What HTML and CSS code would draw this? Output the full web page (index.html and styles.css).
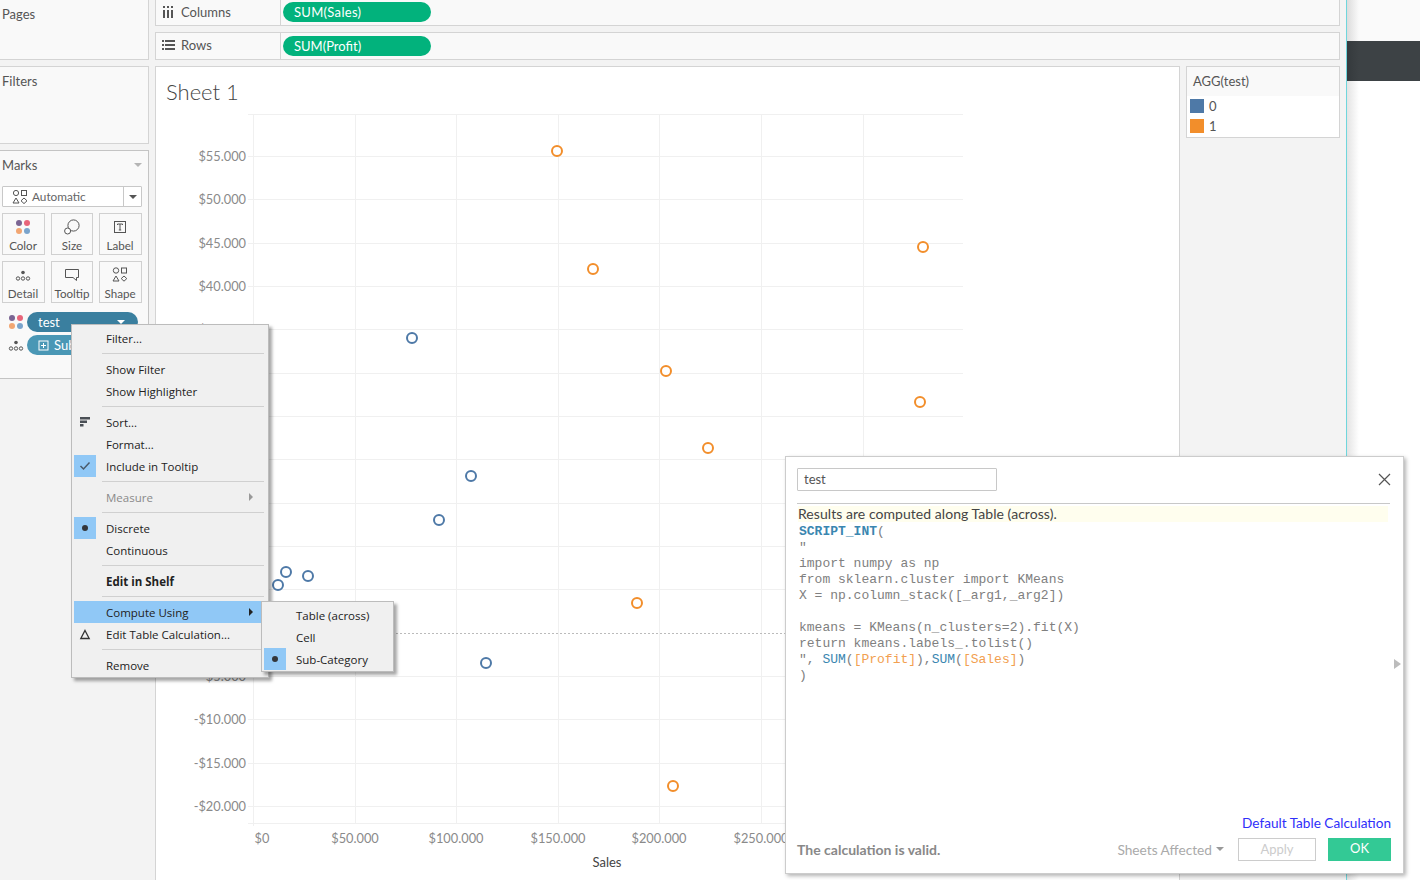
FILE: index.html
```html
<!DOCTYPE html>
<html lang="en">
<head>
<meta charset="utf-8">
<title>Sheet 1</title>
<link rel="stylesheet" href="styles.css">
</head>
<body>
<div class="stage">
  <div class="app">
    <aside class="side">
      <section class="card pages"><div class="card-title">Pages</div></section>
      <section class="card filters"><div class="card-title">Filters</div></section>
      <section class="card marks">
        <div class="marks-head"><span class="card-title">Marks</span><span class="caret caret-light"></span></div>
        <div class="mark-select">
          <svg class="mark-select-icon" width="16" height="14" viewBox="0 0 16 14"><circle cx="4" cy="3" r="2.6"/><rect x="9.5" y="0.5" width="5" height="5"/><path d="M4 8l3 5H1z"/><path d="M12 8l3 2.8-3 2.8-3-2.8z"/></svg>
          <span class="mark-select-label">Automatic</span>
          <span class="mark-select-btn"><span class="caret"></span></span>
        </div>
        <div class="mark-grid">
          <div class="mark-btn">
            <svg width="16" height="16" viewBox="0 0 16 16"><circle cx="4" cy="4" r="3" fill="#7b6593"/><circle cx="12" cy="4" r="3" fill="#e8657a"/><circle cx="4" cy="12" r="3" fill="#f2a672"/><circle cx="12" cy="12" r="3" fill="#7aa4cc"/></svg>
            <span>Color</span>
          </div>
          <div class="mark-btn">
            <svg class="ln" width="16" height="16" viewBox="0 0 16 16"><circle cx="9.5" cy="6.5" r="5.6"/><circle cx="3.6" cy="12" r="3" fill="#fff"/></svg>
            <span>Size</span>
          </div>
          <div class="mark-btn">
            <svg class="ln" width="16" height="16" viewBox="0 0 16 16"><rect x="2.5" y="2.5" width="11" height="11"/><path d="M5.5 6V5h5v1M8 5v6M6.8 11h2.4"/></svg>
            <span>Label</span>
          </div>
          <div class="mark-btn">
            <svg class="ln" width="16" height="16" viewBox="0 0 16 16"><circle cx="8" cy="5.5" r="1.8" fill="#555" stroke="none"/><circle cx="3" cy="11.5" r="1.7"/><circle cx="8" cy="11.5" r="1.7"/><circle cx="13" cy="11.5" r="1.7"/></svg>
            <span>Detail</span>
          </div>
          <div class="mark-btn">
            <svg class="ln" width="16" height="16" viewBox="0 0 16 16"><path d="M1.500 2.500h13v8h-2v3l-3.500-3h-7.500z"/></svg>
            <span>Tooltip</span>
          </div>
          <div class="mark-btn">
            <svg class="ln" width="16" height="16" viewBox="0 0 16 16"><circle cx="4" cy="3.500" r="2.700"/><rect x="9.500" y="1" width="5" height="5"/><path d="M4 9l3 5H1z"/><path d="M12 9l2.800 2.600L12 14.200l-2.800-2.600z"/></svg>
            <span>Shape</span>
          </div>
        </div>
        <div class="pill-row">
          <svg width="16" height="16" viewBox="0 0 16 16"><circle cx="4" cy="4" r="3" fill="#7b6593"/><circle cx="12" cy="4" r="3" fill="#e8657a"/><circle cx="4" cy="12" r="3" fill="#f2a672"/><circle cx="12" cy="12" r="3" fill="#7aa4cc"/></svg>
          <div class="mark-pill pill-dark"><span>test</span><span class="caret caret-white"></span></div>
        </div>
        <div class="pill-row pill-row-2">
          <svg class="ln" width="16" height="16" viewBox="0 0 16 16"><circle cx="8" cy="5.500" r="1.800" fill="#555" stroke="none"/><circle cx="3" cy="11.500" r="1.700"/><circle cx="8" cy="11.500" r="1.700"/><circle cx="13" cy="11.500" r="1.700"/></svg>
          <div class="mark-pill pill-light">
            <svg class="plus" width="11" height="11" viewBox="0 0 11 11"><rect x="1" y="1" width="9" height="9"/><path d="M5.500 3v5M3 5.500h5"/></svg>
            <span>Sub-Category</span>
          </div>
        </div>
      </section>
    </aside>

    <main class="main">
      <div class="shelf shelf-columns">
        <div class="shelf-label">
          <svg width="12" height="12" viewBox="0 0 12 12"><path fill="#555" d="M1 4h2v8H1zM5 4h2v8H5zM9 4h2v8H9zM1 0h2v2H1zM5 0h2v2H5zM9 0h2v2H9z"/></svg>
          <span>Columns</span>
        </div>
        <div class="shelf-pill">SUM(Sales)</div>
      </div>
      <div class="shelf shelf-rows">
        <div class="shelf-label">
          <svg width="13" height="11" viewBox="0 0 13 11"><path fill="#555" d="M0 0h2v2H0zM3 0h10v2H3zM0 4h2v2H0zM3 4h10v2H3zM0 8h2v2H0zM3 8h10v2H3z"/></svg>
          <span>Rows</span>
        </div>
        <div class="shelf-pill">SUM(Profit)</div>
      </div>
      <div class="view">
        <section class="chart-card">
          <h1 class="chart-title">Sheet 1</h1>
          <svg class="chart" width="1023" height="767" viewBox="156 113 1023 767">
            <g class="grid">
              <path d="M248 114.500H963M248 156.500H963M248 199.500H963M248 243.500H963M248 286.500H963M248 329.500H963M248 373.500H963M248 416.500H963M248 459.500H963M248 503.500H963M248 546.500H963M248 589.500H963M248 676.500H963M248 719.500H963M248 763.500H963M248 806.500H963M248 823.500H963"/>
              <path d="M253.500 114V826M355.500 114V823M456.500 114V823M558.500 114V823M659.500 114V823M761.500 114V823M863.500 114V823"/>
            </g>
            <path class="zero" d="M248 633.500H963"/>
            <g class="y-labels">
              <text x="246" y="161">$55.000</text><text x="246" y="204">$50.000</text><text x="246" y="248">$45.000</text><text x="246" y="291">$40.000</text><text x="246" y="334">$35.000</text><text x="246" y="681">-$5.000</text><text x="246" y="724">-$10.000</text><text x="246" y="768">-$15.000</text><text x="246" y="811">-$20.000</text>
            </g>
            <g class="x-labels">
              <text x="262" y="843">$0</text><text x="355" y="843">$50.000</text><text x="456" y="843">$100.000</text><text x="558" y="843">$150.000</text><text x="659" y="843">$200.000</text><text x="761" y="843">$250.000</text>
            </g>
            <text class="axis-title" x="607" y="867">Sales</text>
            <g class="pts-blue">
              <circle cx="412" cy="338" r="5"/><circle cx="471" cy="476" r="5"/><circle cx="439" cy="520" r="5"/><circle cx="286" cy="572" r="5"/><circle cx="308" cy="576" r="5"/><circle cx="278" cy="585" r="5"/><circle cx="486" cy="663" r="5"/>
            </g>
            <g class="pts-orange">
              <circle cx="557" cy="151" r="5"/><circle cx="593" cy="269" r="5"/><circle cx="923" cy="247" r="5"/><circle cx="666" cy="371" r="5"/><circle cx="920" cy="402" r="5"/><circle cx="708" cy="448" r="5"/><circle cx="637" cy="603" r="5"/><circle cx="673" cy="786" r="5"/>
            </g>
          </svg>
        </section>
        <aside class="legend">
          <div class="legend-title">AGG(test)</div>
          <div class="legend-row"><i class="swatch swatch-blue"></i><span>0</span></div>
          <div class="legend-row"><i class="swatch swatch-orange"></i><span>1</span></div>
        </aside>
      </div>
    </main>
  </div>

  <div class="backdrop"><div class="backdrop-band"></div></div>

  <div class="menu context-menu">
    <div class="menu-item"><span class="gutter"></span><span>Filter...</span></div>
    <div class="menu-sep"></div>
    <div class="menu-item"><span class="gutter"></span><span>Show Filter</span></div>
    <div class="menu-item"><span class="gutter"></span><span>Show Highlighter</span></div>
    <div class="menu-sep"></div>
    <div class="menu-item"><span class="gutter"><svg width="11" height="10" viewBox="0 0 11 10"><path fill="#4a4f55" d="M0 0h10v2.500H0zM0 3.500h7V6H0zM0 7h3.500v2.500H0z"/></svg></span><span>Sort...</span></div>
    <div class="menu-item"><span class="gutter"></span><span>Format...</span></div>
    <div class="menu-item"><span class="gutter gutter-on"><svg width="12" height="10" viewBox="0 0 12 10"><path d="M1.500 5l3 3 6-6.500" fill="none" stroke="#4a5a6a" stroke-width="1.500"/></svg></span><span>Include in Tooltip</span></div>
    <div class="menu-sep"></div>
    <div class="menu-item menu-disabled"><span class="gutter"></span><span>Measure</span><i class="arrow arrow-grey"></i></div>
    <div class="menu-sep"></div>
    <div class="menu-item"><span class="gutter gutter-on"><i class="dot"></i></span><span>Discrete</span></div>
    <div class="menu-item"><span class="gutter"></span><span>Continuous</span></div>
    <div class="menu-sep"></div>
    <div class="menu-item menu-bold"><span class="gutter"></span><span>Edit in Shelf</span></div>
    <div class="menu-sep"></div>
    <div class="menu-item menu-active"><span class="gutter"></span><span>Compute Using</span><i class="arrow"></i></div>
    <div class="menu-item"><span class="gutter"><svg width="12" height="11" viewBox="0 0 12 11"><path d="M6 1.500l4.200 8H1.800z" fill="none" stroke="#333" stroke-width="1.300"/></svg></span><span>Edit Table Calculation...</span></div>
    <div class="menu-sep"></div>
    <div class="menu-item"><span class="gutter"></span><span>Remove</span></div>
  </div>

  <div class="menu sub-menu">
    <div class="menu-item"><span class="gutter"></span><span>Table (across)</span></div>
    <div class="menu-item"><span class="gutter"></span><span>Cell</span></div>
    <div class="menu-item"><span class="gutter gutter-on"><i class="dot"></i></span><span>Sub-Category</span></div>
  </div>

  <div class="dialog">
    <div class="dialog-head">
      <div class="name-input">test</div>
      <svg class="close" width="13" height="13" viewBox="0 0 13 13"><path d="M1 1l11 11M12 1L1 12"/></svg>
    </div>
    <div class="dialog-note">Results are computed along Table (across).</div>
    <pre class="code"><b class="fn">SCRIPT_INT</b>(
"
import numpy as np
from sklearn.cluster import KMeans
X = np.column_stack([_arg1,_arg2])

kmeans = KMeans(n_clusters=2).fit(X)
return kmeans.labels_.tolist()
", <span class="fn">SUM</span>(<span class="fld">[Profit]</span>),<span class="fn">SUM</span>(<span class="fld">[Sales]</span>)
)</pre>
    <i class="dialog-arrow"></i>
    <div class="dialog-link">Default Table Calculation</div>
    <div class="dialog-foot">
      <span class="valid">The calculation is valid.</span>
      <span class="affected">Sheets Affected<i class="caret caret-grey"></i></span>
      <span class="btn btn-apply">Apply</span>
      <span class="btn btn-ok">OK</span>
    </div>
  </div>
</div>
</body>
</html>
```
FILE: styles.css
```css
* { box-sizing: border-box; }
html, body { margin: 0; padding: 0; }
body { font-family: "Lato", "Open Sans", sans-serif; color: #555; background: #fff; }
.stage { position: relative; width: 1420px; height: 880px; overflow: hidden; }

.app { display: flex; gap: 6px; width: 1347px; height: 880px; background: #f3f3f3; border-right: 1px solid #6fd6dc; }
.side { width: 149px; flex: none; display: flex; flex-direction: column; gap: 6px; }
.card { background: #f9f9f9; border: 1px solid #d4d4d4; border-left: 0; }
.card-title { font-size: 13px; line-height: 16px; color: #555; padding-left: 2px; }
.pages { height: 60px; padding-top: 6px; border-top: 0; }
.filters { height: 78px; padding-top: 6px; }
.marks { height: 229px; border-color: #c4c4c4; padding: 6px 6px 0 0; }
.marks-head { display: flex; justify-content: space-between; align-items: center; height: 16px; }
.caret { display: block; width: 0; height: 0; border-left: 4px solid transparent; border-right: 4px solid transparent; border-top: 4px solid #555; }
.caret-light { border-top-color: #b5b5b5; }
.caret-white { border-top-color: #fff; }
.caret-grey { border-top-color: #999; }

.mark-select { display: flex; align-items: center; margin: 13px 0 0 2px; height: 21px; background: #fff; border: 1px solid #c8c8c8; border-radius: 1px; }
.mark-select-icon { margin-left: 9px; fill: none; stroke: #555; stroke-width: 1; }
.mark-select-label { font-size: 11.8px; color: #666; margin-left: 4px; flex: 1; }
.mark-select-btn { width: 18px; height: 100%; border-left: 1px solid #c8c8c8; display: flex; align-items: center; justify-content: center; }

.mark-grid { display: grid; grid-template-columns: 43px 42px 43px; column-gap: 6px; row-gap: 6px; margin: 6px 0 0 2px; }
.mark-btn { height: 42px; border: 1px solid #d0d0d0; background: #f9f9f9; display: flex; flex-direction: column; align-items: center; padding-top: 5px; font-size: 11.6px; line-height: 15px; color: #555; white-space: nowrap; }
.mark-btn:nth-child(3n+1), .mark-btn:nth-child(3n) { padding-right: 1px; }
.mark-btn svg { display: block; margin-bottom: 3px; }
.ln { fill: none; stroke: #555; stroke-width: 1; }

.pill-row { display: flex; align-items: center; gap: 3px; margin: 9px 0 0 8px; height: 20px; }
.pill-row > svg { flex: none; }
.pill-row-2 { margin-top: 3px; }
.mark-pill { flex: 0 0 111px; min-width: 0; overflow: hidden; height: 20px; border-radius: 10px; color: #fff; font-size: 13px; display: flex; align-items: center; justify-content: space-between; padding: 0 13px 0 11px; }
.pill-dark { background: #3a7f9f; }
.pill-light { background: #4a97b5; justify-content: flex-start; gap: 5px; white-space: nowrap; }
.plus { fill: none; stroke: #fff; stroke-width: 1; flex: none; }

.main { width: 1185px; flex: none; display: flex; flex-direction: column; }
.shelf { display: flex; background: #f9f9f9; border: 1px solid #d4d4d4; }
.shelf-columns { height: 26px; border-top: 0; }
.shelf-rows { height: 28px; margin-top: 6px; }
.shelf-label { width: 125px; flex: none; border-right: 1px solid #d4d4d4; display: flex; align-items: center; padding: 0 0 1px 6px; font-size: 13px; color: #555; }
.shelf-label svg { margin-right: 7px; }
.shelf-rows .shelf-label { padding-bottom: 2px; }
.shelf-rows .shelf-label svg { margin-right: 6px; }
.shelf-pill { width: 148px; height: 20px; margin: 2px 0 0 2px; border-radius: 10px; background: #02b27c; color: #fff; font-size: 13px; line-height: 20px; padding-left: 11px; letter-spacing: .3px; }
.shelf-rows .shelf-pill { margin-top: 3px; letter-spacing: 0; }

.view { display: flex; gap: 6px; margin-top: 6px; flex: 1; min-height: 0; align-items: flex-start; }
.chart-card { width: 1025px; height: 814px; flex: none; background: #fff; border: 1px solid #d4d4d4; border-bottom: 0; overflow: hidden; }
.chart-title { margin: 0; height: 46px; padding: 11px 0 0 10px; font-size: 22px; line-height: 28px; font-weight: 300; color: #444; }
.chart { display: block; }
.grid path { fill: none; stroke: #f0f0f0; stroke-width: 1; }
.zero { fill: none; stroke: #bbb; stroke-width: 1; stroke-dasharray: 2 2; }
.y-labels text { text-anchor: end; font-size: 12.8px; fill: #8a8a8a; }
.x-labels text { text-anchor: middle; font-size: 12.8px; fill: #8a8a8a; }
.axis-title { text-anchor: middle; font-size: 13px; fill: #444; }
.pts-blue circle { fill: #fff; stroke: #4e79a7; stroke-width: 2; }
.pts-orange circle { fill: #fff; stroke: #f28e2b; stroke-width: 2; }

.legend { width: 154px; flex: none; height: 72px; background: #fff; border: 1px solid #d4d4d4; }
.legend-title { height: 29px; background: #f9f9f9; font-size: 13px; line-height: 29px; padding-left: 6px; color: #555; }
.legend-row { display: flex; align-items: center; gap: 5px; height: 20px; padding-left: 3px; font-size: 13px; color: #555; }
.swatch { width: 14px; height: 14px; display: block; }
.swatch-blue { background: #4e79a7; }
.swatch-orange { background: #f28e2b; }

.backdrop { position: absolute; left: 1347px; top: 0; width: 73px; height: 880px; background: linear-gradient(90deg, #dcdcdc 0, #fafafa 12px, #fafafa 100%); }
.backdrop-band { position: absolute; left: 0; right: 0; top: 41px; height: 40px; background: linear-gradient(90deg, #353a3d 0, #3d4245 12px); }
.backdrop::after { content: ""; position: absolute; left: 0; right: 0; top: 81px; bottom: 0; background: linear-gradient(90deg, #e4e4e4 0, #fff 12px); }

.menu { position: absolute; background: #f0f0f0; border: 1px solid #bcbcbc; box-shadow: 3px 3px 3px rgba(0,0,0,.35); font-family: "Open Sans", sans-serif; font-size: 11.5px; color: #222; }
.context-menu { left: 71px; top: 324px; width: 198px; padding: 2px 2px 1px 2px; }
.sub-menu { left: 261px; top: 601px; width: 133px; padding: 2px 2px 1px 2px; }
.menu-item { display: flex; align-items: center; height: 22px; position: relative; white-space: nowrap; }
.gutter { width: 22px; height: 22px; margin-right: 10px; display: flex; align-items: center; justify-content: center; flex: none; }
.gutter-on { background: #90c8f6; }
.menu-sep { height: 1px; margin: 4px 2px 4px 28px; background: #d0d0d0; }
.menu-disabled { color: #8a8a8a; }
.menu-bold { font-weight: 700; }
.menu-active { background: #90c8f6; margin-right: 5px; }
.dot { width: 6px; height: 6px; border-radius: 50%; background: #33363a; display: block; }
.arrow { position: absolute; right: 8px; top: 7px; width: 0; height: 0; border-top: 4px solid transparent; border-bottom: 4px solid transparent; border-left: 4px solid #222; }
.arrow-grey { border-left-color: #999; right: 13px; }

.dialog { position: absolute; left: 785px; top: 456px; width: 619px; height: 418px; background: #fff; border: 1px solid #ccc; box-shadow: 2px 2px 4px rgba(0,0,0,.3); padding: 11px 12px 0 11px; display: flex; flex-direction: column; }
.dialog-head { display: flex; align-items: center; justify-content: space-between; height: 36px; padding: 0 0 12px 0; border-bottom: 1px solid #c8c8c8; margin-right: 1px; position: relative; }
.name-input { width: 200px; height: 23px; border: 1px solid #c8c8c8; border-radius: 1px; padding-left: 6px; font-size: 13px; line-height: 21px; color: #555; }
.close { position: absolute; right: -1px; top: 5px; fill: none; stroke: #555; stroke-width: 1.2; }
.dialog-note { margin: 2px 3px 0 1px; height: 16px; background: #fffeee; font-size: 14px; line-height: 16px; color: #444; white-space: nowrap; letter-spacing: .05px; }
.code { margin: 0 0 0 2px; font-family: "Liberation Mono", monospace; font-size: 13px; line-height: 16px; color: #808080; height: 293px; padding-top: 2px; }
.fn { color: #3a86b0; }
.code b.fn { font-weight: 700; }
.fld { color: #f2a050; }
.dialog-arrow { position: absolute; right: 2px; top: 202px; width: 0; height: 0; border-top: 5px solid transparent; border-bottom: 5px solid transparent; border-left: 7px solid #bcbcbc; }
.dialog-link { text-align: right; font-size: 13.6px; line-height: 16px; color: #2f2ffa; }
.dialog-foot { display: flex; align-items: center; margin-top: 7px; height: 23px; font-size: 14px; color: #aaa; }
.valid { font-weight: 700; color: #888; flex: 1; padding-bottom: 1px; }
.affected { display: flex; align-items: center; gap: 4px; margin-right: 14px; color: #aaa; font-size: 13.7px; padding-bottom: 1px; }
.btn { height: 23px; text-align: center; line-height: 21px; font-size: 13px; }
.btn-apply { width: 78px; border: 1px solid #ccc; color: #ccc; margin-right: 12px; }
.btn-ok { width: 63px; background: #33c995; color: #fff; line-height: 21px; }
```
